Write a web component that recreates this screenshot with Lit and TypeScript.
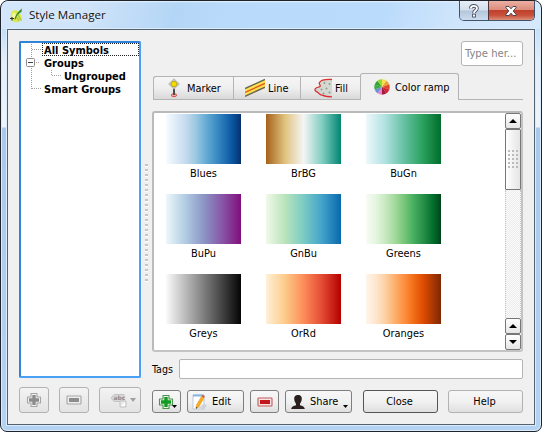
import { LitElement, html, css, svg } from "lit";
import { customElement } from "lit/decorators.js";

const RAMPS: Array<[string, string]> = [
  ["Blues", "#f7fbff,#deebf7 13%,#c6dbef 26%,#9ecae1 39%,#6baed6 52%,#4292c6 65%,#2171b5 78%,#08519c 90%,#08306b"],
  ["BrBG", "#a6611a,#dfc27d 25%,#f5f5f5 50%,#80cdc1 75%,#018571"],
  ["BuGn", "#edf8fb,#b2e2e2 25%,#66c2a4 50%,#2ca25f 75%,#006d2c"],
  ["BuPu", "#edf8fb,#b3cde3 25%,#8c96c6 50%,#8856a7 75%,#810f7c"],
  ["GnBu", "#f0f9e8,#bae4bc 25%,#7bccc4 50%,#43a2ca 75%,#0868ac"],
  ["Greens", "#f7fcf5,#e5f5e0 13%,#c7e9c0 26%,#a1d99b 39%,#74c476 52%,#41ab5d 65%,#238b45 78%,#006d2c 90%,#00441b"],
  ["Greys", "#fafafa,#050505"],
  ["OrRd", "#fef0d9,#fdcc8a 25%,#fc8d59 50%,#e34a33 75%,#b30000"],
  ["Oranges", "#fff5eb,#fee6ce 13%,#fdd0a2 26%,#fdae6b 39%,#fd8d3c 52%,#f16913 65%,#d94801 78%,#a63603 90%,#7f2704"],
];

const plus = (fill: string, line: string, halo: string) => html`<svg width="16" height="16" viewBox="0 0 16 16">
  <path d="M5 1.500h6V5h3.500v6H11v3.500H5V11H1.500V5H5z" fill=${halo} stroke=${line} stroke-width="1.100" stroke-linejoin="round"/>
  <path d="M6.300 3h3.400v3.300H13v3.400H9.700V13H6.300V9.700H3V6.300h3.300z" fill=${fill}/></svg>`;

const minus = (fill: string, line: string, halo: string) => html`<svg width="16" height="16" viewBox="0 0 16 16">
  <rect x="1" y="4" width="14" height="8" rx=".8" fill=${halo} stroke=${line} stroke-width="1.100"/>
  <rect x="3" y="6" width="10" height="4" fill=${fill}/></svg>`;

const WHEEL = ["#f3e04a", "#e7a13a", "#e0452c", "#d9202f", "#a31b3a", "#e487cf", "#6d8fd6", "#3fa84b", "#33a22c", "#8ddb3a"];

const wheel = () => {
  const at = (i: number) => {
    const a = (i / WHEEL.length) * Math.PI * 2 - Math.PI / 2;
    return `${(8 + 7.7 * Math.cos(a)).toFixed(2)} ${(8 + 7.7 * Math.sin(a)).toFixed(2)}`;
  };
  return html`<svg width="16" height="16" viewBox="0 0 16 16">${WHEEL.map(
    (c, i) => svg`<path d="M8 8L${at(i)}A7.700 7.700 0 0 1 ${at(i + 1)}z" fill=${c}/>`
  )}</svg>`;
};

const markerIcon = html`<svg width="12" height="20" viewBox="0 0 12 20">
  <ellipse cx="6" cy="17.200" rx="2.700" ry="1.500" fill="#f3a9a4" stroke="#d8514f" stroke-width="1"/>
  <path d="M6 10v7" stroke="#4c4c4c" stroke-width="2"/>
  <path d="M6 .8L11.300 6 6 11.200.7 6z" fill="#c4c4ba" stroke="#b0b0a8" stroke-width=".8"/>
  <circle cx="6" cy="6" r="2.700" fill="#f6dc00" stroke="#b3a100" stroke-width=".7"/></svg>`;

const lineIcon = html`<svg width="20" height="20" viewBox="0 0 20 20">
  <path d="M0 10L20 1v9L0 19z" fill="#ffe24c"/>
  <path d="M0 10.500L20 1.500M0 18.200L20 9.200" stroke="#67675c" stroke-width="1.500"/>
  <path d="M0 14.400L20 5.400" stroke="#e0581f" stroke-width="1.400"/></svg>`;

const fillIcon = html`<svg width="18" height="20" viewBox="0 0 18 20">
  <path d="M18 1.500C12 1.200 7 1.700 5.500 4.500c-1 2 1.500 2.500.5 4C4.500 9.500.5 9.500 1 12c.5 2 3 1.500 4 3.500s5 2 8 3l5 .3z" fill="#d3d8d0"/>
  <path d="M18 1.500C12 1.200 7 1.700 5.500 4.500c-1 2 1.500 2.500.5 4C4.500 9.500.5 9.500 1 12c.5 2 3 1.500 4 3.500s5 2 8 3l5 .3" fill="none" stroke="#dc2f32" stroke-width="1.300"/>
  <path d="M10.500 4v2M9.500 5h2M15.500 5v2M14.500 6h2M7.500 10.500v2M6.500 11.500h2M12.500 9.500v2M11.500 10.500h2M9.500 14.500v2M8.500 15.500h2M15.500 13.500v2M14.500 14.500h2" stroke="#949a92" stroke-width=".9"/></svg>`;

const editIcon = html`<svg width="16" height="18" viewBox="0 0 16 18">
  <path d="M1 2h11v14H1z" fill="#fff" stroke="#b9c9dc"/>
  <path d="M1 2.500h11" stroke="#8cb6de" stroke-width="2"/>
  <path d="M6 15l5-4 4 1-3 4z" fill="#c6cbd3" opacity=".75"/>
  <path d="M9.500 3.500L12 4.800 6.800 14l-2.800 1.600.2-3.100z" fill="#f7ab20" stroke="#e59a25" stroke-width=".6"/>
  <path d="M9.600 3.400l.8-1.500 2.500 1.300-.8 1.500z" fill="#d4573b"/>
  <path d="M4 15.700l.1-1.700 1.400.8z" fill="#333"/></svg>`;

const personIcon = html`<svg width="16" height="16" viewBox="0 0 16 16">
  <path d="M8 1c3 0 4 2 3.800 4.200-.2 2.300-1.300 3.600-1.800 4.600v1.400c2.300.8 4.300 1 4.800 3.800H1.200c.5-2.800 2.500-3 4.800-3.800V9.800C5.500 8.800 4.400 7.500 4.200 5.200 4 3 5 1 8 1z" fill="#2a211f"/></svg>`;

const tagIcon = html`<svg width="18" height="16" viewBox="0 0 18 16">
  <path d="M4 2.500h10v7H4L1 6z" fill="#d8d8d8" stroke="#c4c4c4"/>
  <text x="3.500" y="8" class="abc">abc</text>
  <path d="M10 9h6v6h-6z" fill="#e9e9e9" stroke="#c4c4c4"/><path d="M11 14l4-4v4z" fill="#fff"/></svg>`;

const leafIcon = html`<svg width="16" height="17" viewBox="0 0 16 17">
  <path d="M5 3C2 4.200 1.300 8 2 11.500S6 15.500 9 15c2.800-.6 3.800-3.200 3.400-6L9.500 4z" fill="#dbe84f"/>
  <path d="M4.500 13L3 9l1.500-4L7 7.500z" fill="#f4f7a8"/>
  <path d="M9 8l3.500 5.500M7.500 10l2.500 4" stroke="#b5cb3f" stroke-width="1.500"/>
  <path d="M5.500 12.500C6.500 8 8.500 4.800 13 1.500L12.500 5C9.500 6.500 7.500 9 6.500 12.500z" fill="#3d8f2b"/>
  <path d="M1 11.500h4M3 10v3.500" stroke="#2b3b1e" stroke-width="1.100" fill="none"/></svg>`;

const tri = (up: boolean) => html`<svg width="8" height="4" viewBox="0 0 8 4"><path d=${up ? "M0 4L4 0l4 4z" : "M0 0h8L4 4z"} fill="#000"/></svg>`;

@customElement("app-root")
export class AppRoot extends LitElement {
  static styles = css`
    :host { display: block; width: 542px; height: 432px; background: #fff; font: 10.9px/13px "DejaVu Sans Condensed", "DejaVu Sans", sans-serif; font-stretch: condensed; color: #000; overflow: hidden; }
    * { box-sizing: border-box; }
    svg { display: block; flex: none; }
    .window { width: 542px; height: 432px; padding: 0 6px 6px 6px; border: 1px solid #1e232c; border-radius: 8px 8px 7px 7px; display: flex; flex-direction: column;
      background: linear-gradient(to bottom, #b5d6f5 0, #c3dff8 28px, #e3eefa 60px, #eef4fb 126px, #a9c9ec 127px, #abcbee 180px, #b4d2f2 100%); box-shadow: inset 0 0 0 1px #d9ecfb; }
    .title { height: 28px; margin: 0 -5px; padding: 1px 0 0 7px; display: flex; align-items: flex-start; flex: none; border-radius: 7px 7px 0 0;
      background: linear-gradient(to bottom, #e4f1fc 0, transparent 2px), linear-gradient(105deg, #d3e6fa 0, #cfe3f9 16%, #b4d6f6 32%, #b9dafa 42%, #badbfc 70%, #cfe5fb 84%, #d6e9fc 100%); }
    .title svg { margin-top: 5px; }
    .name { font: 11.6px/17px "Open Sans", sans-serif; font-stretch: normal; margin: 4px 0 0 4px; flex: 1; color: #111; text-shadow: 0 0 6px rgba(255, 255, 255, 0.8); }
    .caps { display: flex; width: 76px; height: 20px; margin: -1px 5px 0 0; border: 1px solid #41536b; border-top: 0; border-radius: 0 0 5px 5px; overflow: hidden; }
    .caps svg { margin: 0; }
    .cap { display: flex; justify-content: center; align-items: center; width: 28px; background: linear-gradient(#e6eef7 0, #d3dfec 48%, #b4c6da 52%, #cbdcee 100%); }
    .cap.x { width: 47px; border-left: 1px solid #53323a; background: linear-gradient(#eab0a3 0, #dc8d7c 45%, #c0412c 50%, #c8503a 75%, #dc8f78 100%); }
    .client { flex: 1; min-height: 0; border: 1px solid #536273; background: #f0f0f0; padding: 11px 11px 10px; display: flex; outline: 1px solid #ddecfb; }
    .left { width: 122px; flex: none; display: flex; flex-direction: column; }
    .tree { height: 337px; background: #fff; border: 2px solid #4aa0f5; border-left-color: #2f83d8; border-top-color: #2f83d8; border-radius: 2px; font-weight: bold; font-size: 11px; display: flex; }
    .branch { width: 32px; }
    .nodes { flex: 1; margin-left: -11px; }
    .node { height: 13px; line-height: 15px; padding-left: 2px; width: 97px; white-space: nowrap; }
    .node.first { outline: 1px dotted #222; outline-offset: -1px; }
    .node.sub { padding-left: 22px; }
    .tools { display: flex; gap: 10px; margin-top: 9px; }
    .btn { height: 23px; border: 1px solid #7e7e7e; border-radius: 3px; background: linear-gradient(#f7f7f7, #f1f1f1 50%, #dfdfdf); display: flex; align-items: center; justify-content: center; position: relative; white-space: nowrap; }
    .btn.off { width: 30px; height: 26px; border-color: #b2b2b2; background: linear-gradient(#f3f3f3, #e3e3e3); }
    .btn.wide { width: 42px; gap: 2px; padding-left: 5px; }
    .drop { position: absolute; right: 3px; bottom: 4px; }
    .split { width: 11px; flex: none; padding: 123px 0 0 4px; }
    .dots { width: 3px; height: 119px; background: repeating-linear-gradient(#c6c6c6 0 2px, #fff 2px 3px, #f0f0f0 3px 5px); }
    .right { flex: 1; min-width: 0; display: flex; flex-direction: column; }
    .search { align-self: flex-end; width: 62px; height: 25px; border: 1px solid #b4b4b4; border-radius: 3px; background: #fff; color: #858585; line-height: 24px; padding-left: 3px; font-size: 11.2px; white-space: nowrap; }
    .tabs { height: 27px; margin-top: 7px; display: flex; align-items: flex-end; padding-left: 1px; }
    .tab { height: 24px; border: 1px solid #b4b4b4; border-right-width: 0; display: flex; align-items: center; background: linear-gradient(#f5f5f5, #efefef 50%, #d9d9d9); white-space: nowrap; }
    .tab:first-child { border-top-left-radius: 3px; }
    .tab.marker { width: 80px; padding-left: 14px; gap: 7px; }
    .tab.line { width: 67px; padding-left: 11px; gap: 3px; }
    .tab.fill { width: 60px; padding-left: 13px; gap: 3px; }
    .tab.on { height: 27px; width: 99px; background: #f0f0f0; border: 1px solid #b4b4b4; border-bottom: 0; border-radius: 3px 3px 0 0; padding-left: 13px; gap: 5px; }
    .rest { flex: 1; border-bottom: 1px solid #b4b4b4; height: 1px; }
    .list { height: 241px; margin-top: 11px; border: 2px solid #bababa; border-right-color: #c3c3c3; border-bottom-color: #c3c3c3; border-radius: 3px; background: #fff; display: flex; }
    .grid { flex: 1; display: grid; grid-template-columns: repeat(3, 75px); grid-auto-rows: 80px; column-gap: 25px; padding: 1px 0 0 12px; overflow: hidden; }
    .swatch { height: 50px; }
    .cap-text { text-align: center; margin-top: 3px; }
    .bar { width: 16px; display: flex; flex-direction: column; }
    .sb { height: 16px; border: 1px solid #777; border-radius: 2px; background: linear-gradient(#fff, #e6e6e6); display: flex; align-items: center; justify-content: center; flex: none; }
    .thumb { height: 61px; border: 1px solid #777; border-radius: 1px; background: linear-gradient(to right, #fff, #e5e5e5); display: flex; align-items: center; justify-content: center; flex: none; }
    .track { flex: 1; border: 1px dotted #c5c5c5; border-width: 0 1px; background: repeating-conic-gradient(#ececec 0 25%, #fbfbfb 0 50%) 0 0 / 2px 2px; }
    .tags { display: flex; align-items: center; margin-top: 7px; height: 20px; }
    .tags span { width: 27px; font-size: 10.6px; }
    .field { flex: 1; height: 20px; border: 1px solid #b4b4b4; border-radius: 2px; background: #fff; }
    .actions { display: flex; margin-top: 11px; }
    .abc { font: bold 6px "DejaVu Sans", sans-serif; fill: #8c8c8c; }
    .add { width: 29px; margin-right: 6px; padding-right: 2px; }
    .edit { width: 57px; margin-right: 6px; gap: 4px; justify-content: flex-start; padding-left: 4px; }
    .del { width: 29px; margin-right: 6px; }
    .share { width: 67px; margin-right: 11px; gap: 4px; justify-content: flex-start; padding-left: 4px; }
    .close { width: 75px; margin-right: 10px; border-color: #555; padding-right: 2px; }
    .help { width: 75px; border-color: #b2b2b2; padding-right: 2px; }
  `;

  render() {
    return html`<div class="window">
      <div class="title">${leafIcon}<div class="name">Style Manager</div>
        <div class="caps">
          <div class="cap"><svg width="12" height="14" viewBox="0 0 12 14">
            <path d="M2.800 4.500C2.800 1 9 1 9 4.300 9 6.500 6 6.500 6 9" fill="none" stroke="#4a5265" stroke-width="3.600"/><rect x="4.100" y="9.700" width="3.800" height="3.800" fill="#4a5265"/>
            <path d="M2.800 4.500C2.800 1 9 1 9 4.300 9 6.500 6 6.500 6 9" fill="none" stroke="#fff" stroke-width="1.800"/><rect x="5" y="10.600" width="2" height="2" fill="#fff"/></svg></div>
          <div class="cap x"><svg width="12" height="12" viewBox="0 0 12 12"><path d="M1 1.500h3l2 2.300 2-2.300h3v1.300L8.200 6 11 9.200v1.300H8L6 8.200 4 10.500H1V9.200L3.800 6 1 2.800z" fill="#fff" stroke="#4b4450" stroke-width="1"/></svg></div>
        </div>
      </div>
      <div class="client">
        <div class="left">
          <div class="tree">
            <div class="branch"><svg width="42" height="56" viewBox="0 0 42 56">
              <path d="M10.500 1v13M10.500 25v21M11 6.500h9M15 19.500h4M11 45.500h9M30.500 27v5M31 32.500h9" fill="none" stroke="#a0a0a0" stroke-dasharray="1 1"/>
              <rect x="5.500" y="15.500" width="8" height="8" rx="1" fill="#fff" stroke="#8c8c8c"/><path d="M7 19.500h5" stroke="#444"/></svg></div>
            <div class="nodes">
              <div class="node first">All Symbols</div>
              <div class="node">Groups</div>
              <div class="node sub">Ungrouped</div>
              <div class="node">Smart Groups</div>
            </div>
          </div>
          <div class="tools">
            <div class="btn off">${plus("#8c8c8c", "#a5a5a5", "#f2f2f2")}</div>
            <div class="btn off">${minus("#8c8c8c", "#a5a5a5", "#eeeeee")}</div>
            <div class="btn off wide">${tagIcon}<svg width="6" height="4" viewBox="0 0 6 4"><path d="M0 0h6L3 4z" fill="#a0a0a0"/></svg></div>
          </div>
        </div>
        <div class="split"><div class="dots"></div></div>
        <div class="right">
          <div class="search">Type her...</div>
          <div class="tabs">
            <div class="tab marker">${markerIcon}Marker</div>
            <div class="tab line">${lineIcon}Line</div>
            <div class="tab fill">${fillIcon}Fill</div>
            <div class="tab on">${wheel()}Color ramp</div>
            <div class="rest"></div>
          </div>
          <div class="list">
            <div class="grid">${RAMPS.map(([name, stops]) => html`<div>
              <div class="swatch" style="background:linear-gradient(to right,${stops})"></div>
              <div class="cap-text">${name}</div></div>`)}</div>
            <div class="bar">
              <div class="sb">${tri(true)}</div>
              <div class="thumb"><svg width="11" height="19" viewBox="0 0 11 19">${[0, 4, 8, 12, 16].map((y) =>
                [0, 4, 8].map((x) => svg`<path d="M${x} ${y}h2v2h-2z" fill="#bbb"/>`))}</svg></div>
              <div class="track"></div>
              <div class="sb">${tri(true)}</div>
              <div class="sb">${tri(false)}</div>
            </div>
          </div>
          <div class="tags"><span>Tags</span><div class="field"></div></div>
          <div class="actions">
            <div class="btn add">${plus("#139a22", "#4c9352", "#e9f6e6")}<svg class="drop" width="5" height="3" viewBox="0 0 5 3"><path d="M0 0h5L2.500 3z"/></svg></div>
            <div class="btn edit">${editIcon}Edit</div>
            <div class="btn del">${minus("#c5161d", "#c25a5c", "#f7e4e2")}</div>
            <div class="btn share">${personIcon}Share<svg class="drop" width="5" height="3" viewBox="0 0 5 3"><path d="M0 0h5L2.500 3z"/></svg></div>
            <div class="btn close">Close</div>
            <div class="btn help">Help</div>
          </div>
        </div>
      </div>
    </div>`;
  }
}
